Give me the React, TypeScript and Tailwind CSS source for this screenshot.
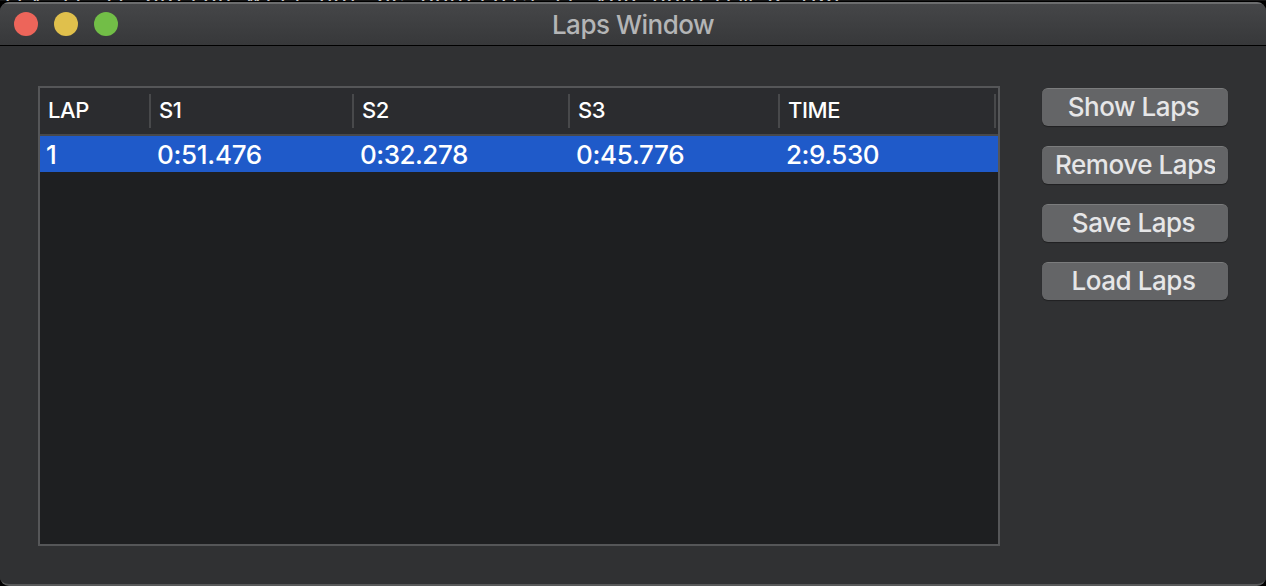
import type { ReactNode } from "react";

const columns = [
  { label: "LAP", value: "1", width: "w-[111px]", cell: "pl-[6px]" },
  { label: "S1", value: "0:51.476", width: "w-[203px]", cell: "pl-[6px] tracking-[-0.3px]" },
  { label: "S2", value: "0:32.278", width: "w-[216px]", cell: "pl-[6px] tracking-[-0.5px]" },
  { label: "S3", value: "0:45.776", width: "w-[210px]", cell: "pl-[6px] tracking-[-0.3px]" },
  { label: "TIME", value: "2:9.530", width: "w-[216px]", cell: "pl-[6px] tracking-[-0.45px]" },
];

function Light({ color }: { color: string }) {
  return <span className={`size-6 rounded-full ${color}`} />;
}

function PushButton({ children }: { children: ReactNode }) {
  return (
    <button className="h-[38px] w-[186px] rounded-[6px] border-t border-[#7b7c7d] bg-[#646567] px-[13px] pb-[2px] text-[26px] font-[450] leading-[35px] tracking-[-0.45px] text-[#e6e6e7] shadow-[0_1px_1px_rgba(0,0,0,0.35)]">
      <span className="block overflow-hidden whitespace-nowrap pr-[3px] text-center">{children}</span>
    </button>
  );
}

export default function App() {
  return (
    <div className="flex h-[586px] w-[1266px] flex-col overflow-hidden bg-black font-['Inter',sans-serif]">
      <div className="flex h-px shrink-0 items-end overflow-hidden whitespace-pre bg-[#161616] font-['Liberation_Mono',monospace] text-[24px] leading-[6px] tracking-[0.08px] text-[#c8c8c8]">
        ity if it button will not be controls if you confirm a lap
      </div>
      <div className="mt-px flex min-h-0 flex-1 flex-col overflow-hidden rounded-[9px] border-b-2 border-[#58595a] bg-[#303133]">
        <header className="relative flex h-11 shrink-0 items-center justify-center border-b border-t-2 border-b-black border-t-[#6c6d6e] bg-linear-to-b from-[#454648] to-[#37383a]">
          <div className="absolute left-[14px] top-2 flex gap-4">
            <Light color="bg-[#ed655a]" />
            <Light color="bg-[#e0c04c]" />
            <Light color="bg-[#72be47]" />
          </div>
          <h1 className="text-[26px] font-[450] leading-8 tracking-[-0.5px] text-[#b4b5b6]">Laps Window</h1>
        </header>
        <main className="flex pl-[38px] pt-10">
          <section className="h-[460px] w-[962px] border-2 border-[#555658] bg-[#1e1f21]">
            <div className="flex h-12 border-b-2 border-[#48494b] bg-[#2b2c2f] pt-[6px]">
              {columns.map((c) => (
                <div key={c.label} className={`h-[34px] shrink-0 border-r-2 border-[#48494b] pl-2 text-[22px] font-medium leading-[33px] tracking-[-0.4px] text-white ${c.width}`}>
                  {c.label}
                </div>
              ))}
            </div>
            <div className="flex h-9 bg-[#1f5ac9]">
              {columns.map((c) => (
                <div key={c.label} className={`shrink-0 text-[26px] font-medium leading-[38px] text-white ${c.width} ${c.cell}`}>
                  {c.value}
                </div>
              ))}
            </div>
          </section>
          <aside className="ml-[42px] flex flex-col gap-5 pt-[2px]">
            <PushButton>Show Laps</PushButton>
            <PushButton>Remove Laps</PushButton>
            <PushButton>Save Laps</PushButton>
            <PushButton>Load Laps</PushButton>
          </aside>
        </main>
      </div>
    </div>
  );
}
